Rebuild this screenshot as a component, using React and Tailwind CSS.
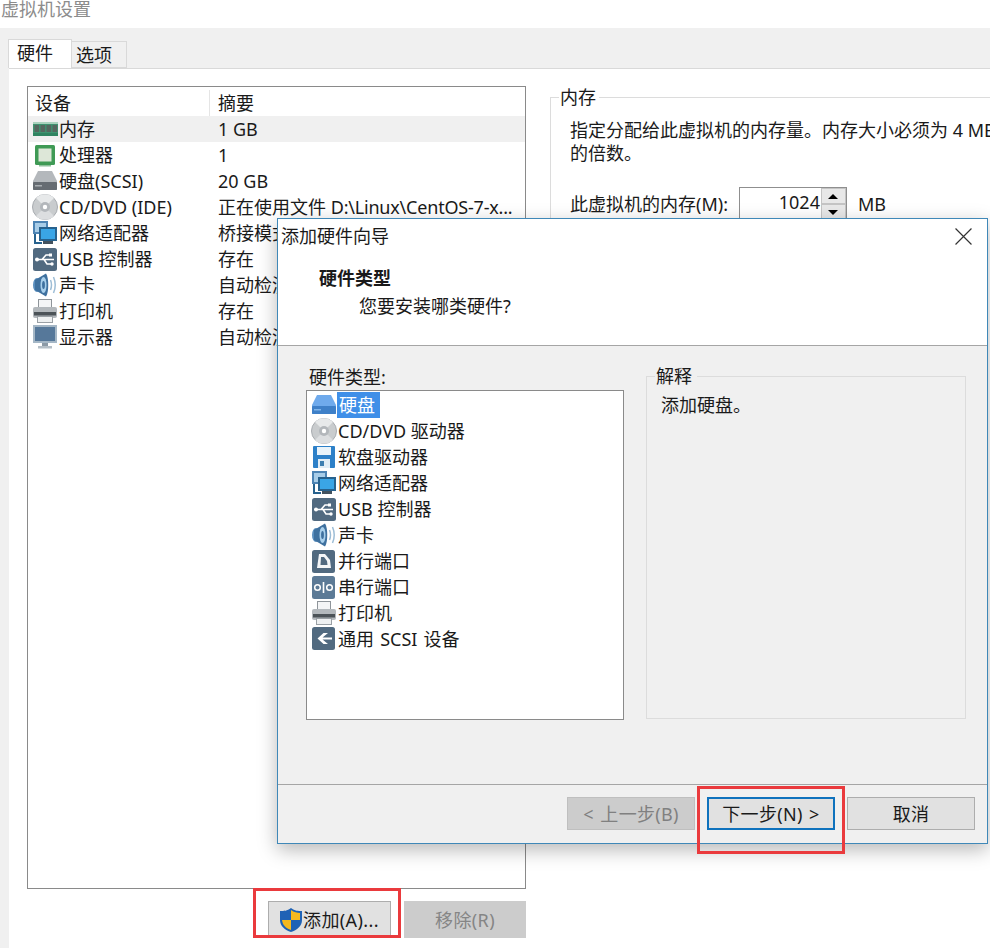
import React from "react";

const Svg = ({ children, className = "w-[26px] h-[26px]" }) => (
  <svg viewBox="0 0 26 26" className={className + " shrink-0"}>{children}</svg>
);

const Mem = () => (
  <Svg>
    <rect x="1" y="6" width="25" height="14" fill="#3f9270" />
    <rect x="1" y="6" width="25" height="2" fill="#a9d2bd" />
    {[2.5, 8.5, 14.5, 20.5].map((x) => (
      <rect key={x} x={x} y="9" width="4.6" height="7" fill="#55675f" />
    ))}
    <rect x="1" y="17" width="25" height="3" fill="#2f8461" />
  </Svg>
);
const Cpu = () => (
  <Svg>
    <rect x="3" y="3" width="20" height="20" rx="1.5" fill="#3f9a55" />
    <rect x="6.5" y="6.5" width="13" height="13" fill="#dde7d8" />
    <rect x="7" y="23" width="12" height="1.5" fill="#8cc09a" />
  </Svg>
);
const Hdd = ({ blue }) => (
  <Svg>
    <path d="M6 3 H20 L25 13 V22 H1 V13 Z" fill={blue ? "#6faaec" : "#b4b8bc"} />
    <rect x="1" y="14" width="24" height="8" rx="1" fill={blue ? "#3f80c8" : "#666c72"} />
    <rect x="3" y="17" width="7" height="1.5" fill={blue ? "#7fb4ea" : "#a8adb1"} />
  </Svg>
);
const Cd = () => (
  <Svg>
    <circle cx="13" cy="13" r="12.5" fill="#c9ccce" stroke="#a8acb0" />
    <path d="M13 13 L4 4 A12.5 12.5 0 0 1 22 4 Z" fill="#e7e9ea" />
    <path d="M13 13 L4 22 A12.5 12.5 0 0 0 22 22 Z" fill="#dcdee0" />
    <circle cx="13" cy="13" r="5" fill="#b3b7bb" />
    <circle cx="13" cy="13" r="2.2" fill="#fff" />
  </Svg>
);
const Net = () => (
  <Svg>
    <rect x="1" y="1" width="15" height="13" fill="#4d84b4" />
    <rect x="3" y="3" width="11" height="9" fill="#a8cde8" />
    <rect x="7" y="7" width="18" height="14" fill="#27628e" />
    <rect x="9" y="9" width="14" height="10" fill="#3aa5e6" />
    <rect x="11" y="21" width="10" height="3" fill="#43525e" />
    <path d="M3 14 V23 H10" stroke="#27628e" strokeWidth="2" fill="none" />
  </Svg>
);
const Usb = () => (
  <Svg>
    <rect x="1" y="2" width="24" height="23" rx="2.5" fill="#516a80" />
    <path d="M4 13.5 H22 M10 13.5 L14 9 H18 M12 13.5 L15 18 H19" stroke="#fff" strokeWidth="1.6" fill="none" />
    <circle cx="5" cy="13.5" r="2" fill="#fff" />
    <rect x="17" y="7.5" width="3" height="3" fill="#fff" />
    <circle cx="20" cy="18" r="1.7" fill="#fff" />
  </Svg>
);
const Sound = () => (
  <Svg>
    <ellipse cx="5" cy="13" rx="4" ry="7" fill="#5a8fbf" />
    <path d="M3 8 L14 1.5 C17 6 17 20 14 24.5 L3 18 Z" fill="#3f719f" />
    <ellipse cx="11.5" cy="13" rx="3" ry="8" fill="#a9d0ec" />
    <ellipse cx="11.5" cy="13" rx="1.4" ry="4" fill="#3f719f" />
    <path d="M18.5 8 Q20.5 13 18.5 18 M21.5 5 Q25 13 21.5 21" stroke="#9dbdd6" strokeWidth="1.5" fill="none" />
  </Svg>
);
const Printer = () => (
  <Svg>
    <rect x="6.5" y="1.5" width="13" height="9" fill="#f4f5f6" stroke="#8f959a" />
    <rect x="1" y="9" width="24" height="11" rx="2" fill="#b3b8bc" />
    <rect x="2" y="14" width="22" height="3.5" fill="#4c5358" />
    <rect x="5.5" y="18.5" width="15" height="6" fill="#eef0f1" stroke="#9aa0a5" />
  </Svg>
);
const Monitor = () => (
  <Svg>
    <rect x="1" y="1" width="24" height="18" fill="#a5b7c6" />
    <rect x="3" y="3" width="20" height="14" fill="#56789a" />
    <rect x="10" y="19" width="6" height="3" fill="#8c9aa6" />
    <rect x="6" y="22" width="14" height="2.5" fill="#b5bfc7" />
  </Svg>
);
const Floppy = () => (
  <Svg>
    <rect x="2" y="2" width="22" height="22" rx="1" fill="#2d80c8" />
    <rect x="6" y="3" width="14" height="8" fill="#e9f3fa" />
    <rect x="7" y="15" width="12" height="9" fill="#e2edf5" />
    <rect x="9" y="17" width="4" height="5" fill="#3f7fb0" />
  </Svg>
);
const Parallel = () => (
  <Svg>
    <rect x="1" y="2" width="23" height="23" rx="2.5" fill="#516a80" />
    <path d="M8 6 H14 L19 12 L20 20 H6 Z" fill="#f4f6f8" />
    <path d="M10 9 H13 L16 13 L16.5 17 H9.5 Z" fill="#516a80" />
  </Svg>
);
const Serial = () => (
  <Svg>
    <rect x="1" y="2" width="23" height="23" rx="2.5" fill="#5c7a96" />
    <circle cx="6.5" cy="13.5" r="2.8" fill="none" stroke="#fff" strokeWidth="1.5" />
    <circle cx="18.5" cy="13.5" r="2.8" fill="none" stroke="#fff" strokeWidth="1.5" />
    <rect x="11.7" y="8" width="1.6" height="11" fill="#fff" />
  </Svg>
);
const Scsi = () => (
  <Svg>
    <rect x="1" y="1" width="23" height="23" rx="2.5" fill="#516a80" />
    <path d="M17 7 H12.5 L6.5 12.5 L12.5 18 H17 L11.5 13.5 H21 V11.5 H11.5 Z" fill="#fff" />
  </Svg>
);
const Shield = () => (
  <svg viewBox="0 0 24 26" className="w-[24px] h-[26px] shrink-0">
    <path d="M12 1 C16 4 19 4 23 4 V13 C23 19 18 23 12 25 C6 23 1 19 1 13 V4 C5 4 8 4 12 1 Z" fill="#1f62b5" />
    <path d="M12 3 C15 5.5 18 5.8 21 6 V13 H12 Z" fill="#f6b91e" />
    <path d="M12 13 H3 C3.5 18 7 21.3 12 23 Z" fill="#f6b91e" />
  </svg>
);

const devices = [
  [Mem, "内存", "1 GB"],
  [Cpu, "处理器", "1"],
  [Hdd, "硬盘(SCSI)", "20 GB"],
  [Cd, "CD/DVD (IDE)", <>正在使用文件 <span className="tracking-[-0.2px]">D:\Linux\CentOS-7-x...</span></>],
  [Net, "网络适配器", "桥接模式 (自动)"],
  [Usb, "USB 控制器", "存在"],
  [Sound, "声卡", "自动检测"],
  [Printer, "打印机", "存在"],
  [Monitor, "显示器", "自动检测"],
];

const hardware = [
  [Cd, "CD/DVD 驱动器"],
  [Floppy, "软盘驱动器"],
  [Net, "网络适配器"],
  [Usb, "USB 控制器"],
  [Sound, "声卡"],
  [Parallel, "并行端口"],
  [Serial, "串行端口"],
  [Printer, "打印机"],
  [Scsi, <span className="[word-spacing:1.5px]">通用 SCSI 设备</span>],
];

const Btn = ({ children, className = "" }) => (
  <div className={"h-[33px] w-[128px] flex items-center justify-center tracking-[0.3px] [word-spacing:1.5px] " + className}>{children}</div>
);

export default function App() {
  return (
    <div
      className="relative w-[990px] h-[948px] overflow-hidden bg-white flex flex-col text-[18px] leading-[26px] text-[#1a1a1a]"
      style={{ fontFamily: '"Noto Sans", "Noto Sans CJK SC", sans-serif' }}
    >
      <div className="h-[28px] shrink-0 pl-[1px] text-[#8c8c8c] leading-[18px]">虚拟机设置</div>
      <div className="flex-1 bg-[#f0f0f0] pt-[11px] flex flex-col min-h-0">
        <div className="flex h-[29px] shrink-0 pl-[8px]">
          <div className="w-[64px] bg-white border border-b-0 border-[#d9d9d9] pl-[8px] leading-[27px] relative z-10">硬件</div>
          <div className="w-[55px] mt-[2px] bg-[#f0f0f0] border border-l-0 border-[#d9d9d9] pl-[4px] leading-[27px]">选项</div>
        </div>
        <div className="flex-1 ml-[9px] bg-white border-t border-[#d9d9d9] pl-[18px] pt-[17px] flex min-h-0">
          <div className="w-[499px] shrink-0 flex flex-col">
            <div className="h-[803px] border border-[#8a8a8a] bg-white">
              <div className="flex h-[29px] pt-[3px]">
                <div className="w-[182px] pl-[7px] border-r border-[#e5e5e5]">设备</div>
                <div className="pl-[8px]">摘要</div>
              </div>
              {devices.map(([I, n, s], i) => (
                <div key={i} className={"flex h-[26px] items-center " + (i === 0 ? "bg-[#f0f0f0]" : "")}>
                  <div className="w-[183px] pl-[4px] flex items-center gap-[1px] whitespace-nowrap">
                    <I />
                    <span>{n}</span>
                  </div>
                  <span className="pl-[7px] whitespace-nowrap">{s}</span>
                </div>
              ))}
            </div>
            <div className="flex justify-end gap-[13px] mt-[12px]">
              <div className="w-[123px] h-[37px] bg-[#e1e1e1] border border-[#adadad] flex items-center pl-[10px] tracking-[0.4px]">
                <Shield />
                <span>添加(A)...</span>
              </div>
              <div className="w-[122px] h-[37px] bg-[#cccccc] text-[#858585] flex items-center justify-center tracking-[0.4px]">移除(R)</div>
            </div>
          </div>
          <div className="ml-[24px] w-[600px] shrink-0 mt-[11px] h-[700px] border-t border-l border-[#dcdcdc] pl-[19px]">
            <div className="-mt-[14px] -ml-[11px] w-[40px] pl-[1px] bg-white">内存</div>
            <div className="mt-[9px] whitespace-nowrap leading-[23px]">
              指定分配给此虚拟机的内存量。内存大小必须为 4 MB
              <br />
              的倍数。
            </div>
            <div className="mt-[22px] flex items-center h-[34px] whitespace-nowrap">
              <span>此虚拟机的内存(M):</span>
              <div className="ml-[11px] w-[108px] h-[34px] border border-[#8f8f8f] flex">
                <div className="flex-1 text-right pr-[1px] leading-[28px]">1024</div>
                <div className="w-[25px] flex flex-col bg-[#e8e8e8]">
                  <div className="h-[16px] flex items-center justify-center border border-[#c4c4c4]">
                    <div className="w-0 h-0 border-x-[5px] border-x-transparent border-b-[5px] border-b-black" />
                  </div>
                  <div className="h-[16px] flex items-center justify-center border border-[#c4c4c4]">
                    <div className="w-0 h-0 border-x-[5px] border-x-transparent border-t-[5px] border-t-black" />
                  </div>
                </div>
              </div>
              <span className="ml-[11px]">MB</span>
            </div>
          </div>
        </div>
      </div>

      {/* dialog */}
      <div className="absolute left-[277px] top-[218px] w-[711px] h-[626px] border border-[#3f88b8] shadow-[0_6px_18px_rgba(0,0,0,0.28)] flex flex-col bg-white">
        <div className="h-[127px] shrink-0 border-b border-[#a5a5a5] bg-white">
          <div className="flex items-center justify-between h-[34px] pl-[3px] pr-[15px]">
            <span>添加硬件向导</span>
            <svg viewBox="0 0 16 16" className="w-[17px] h-[17px]">
              <path d="M0.5 0.5 L15.5 15.5 M15.5 0.5 L0.5 15.5" stroke="#333" strokeWidth="1.1" fill="none" />
            </svg>
          </div>
          <div className="pl-[41px] mt-[12px] font-bold">硬件类型</div>
          <div className="pl-[81px] mt-[2px]">您要安装哪类硬件?</div>
        </div>
        <div className="flex-1 bg-[#f0f0f0] flex pl-[28px] pt-[18px] border-b border-[#a5a5a5] min-h-0">
          <div className="w-[318px] shrink-0">
            <div className="pl-[3px] h-[26px]">硬件类型:</div>
            <div className="h-[330px] border border-[#8a8a8a] bg-white pt-[1px] pl-[4px] flex flex-col">
              <div className="flex items-center h-[26px]">
                <Hdd blue />
                <span className="bg-[#3f8fe8] text-white pl-[2px] pr-[5px] leading-[26px]">硬盘</span>
              </div>
              {hardware.map(([I, n], i) => (
                <div key={i} className="flex items-center h-[26px] gap-[1px] whitespace-nowrap">
                  <I />
                  <span>{n}</span>
                </div>
              ))}
            </div>
          </div>
          <div className="ml-[22px] w-[320px] h-[343px] mt-[12px] border border-[#dcdcdc] bg-[#f0f0f0] pl-[15px]">
            <div className="-mt-[14px] -ml-[7px] w-[42px] pl-[1px] bg-[#f0f0f0]">解释</div>
            <div className="mt-[3px] -ml-[1px]">添加硬盘。</div>
          </div>
        </div>
        <div className="h-[58px] shrink-0 bg-[#f0f0f0] flex justify-end gap-[12px] pr-[12px] pt-[12px]">
          <Btn className="bg-[#cccccc] text-[#808080] border border-[#bfbfbf]">&lt; 上一步(B)</Btn>
          <Btn className="bg-[#e1e1e1] border-2 border-[#0f72bd]">下一步(N) &gt;</Btn>
          <Btn className="bg-[#e1e1e1] border border-[#adadad]">取消</Btn>
        </div>
      </div>

      {/* red annotations */}
      <div className="absolute left-[697px] top-[786px] w-[148px] h-[68px] border-[3px] border-[#ea3a3d]" />
      <div className="absolute left-[253px] top-[888px] w-[148px] h-[50px] border-[3px] border-[#ea3a3d]" />
    </div>
  );
}
